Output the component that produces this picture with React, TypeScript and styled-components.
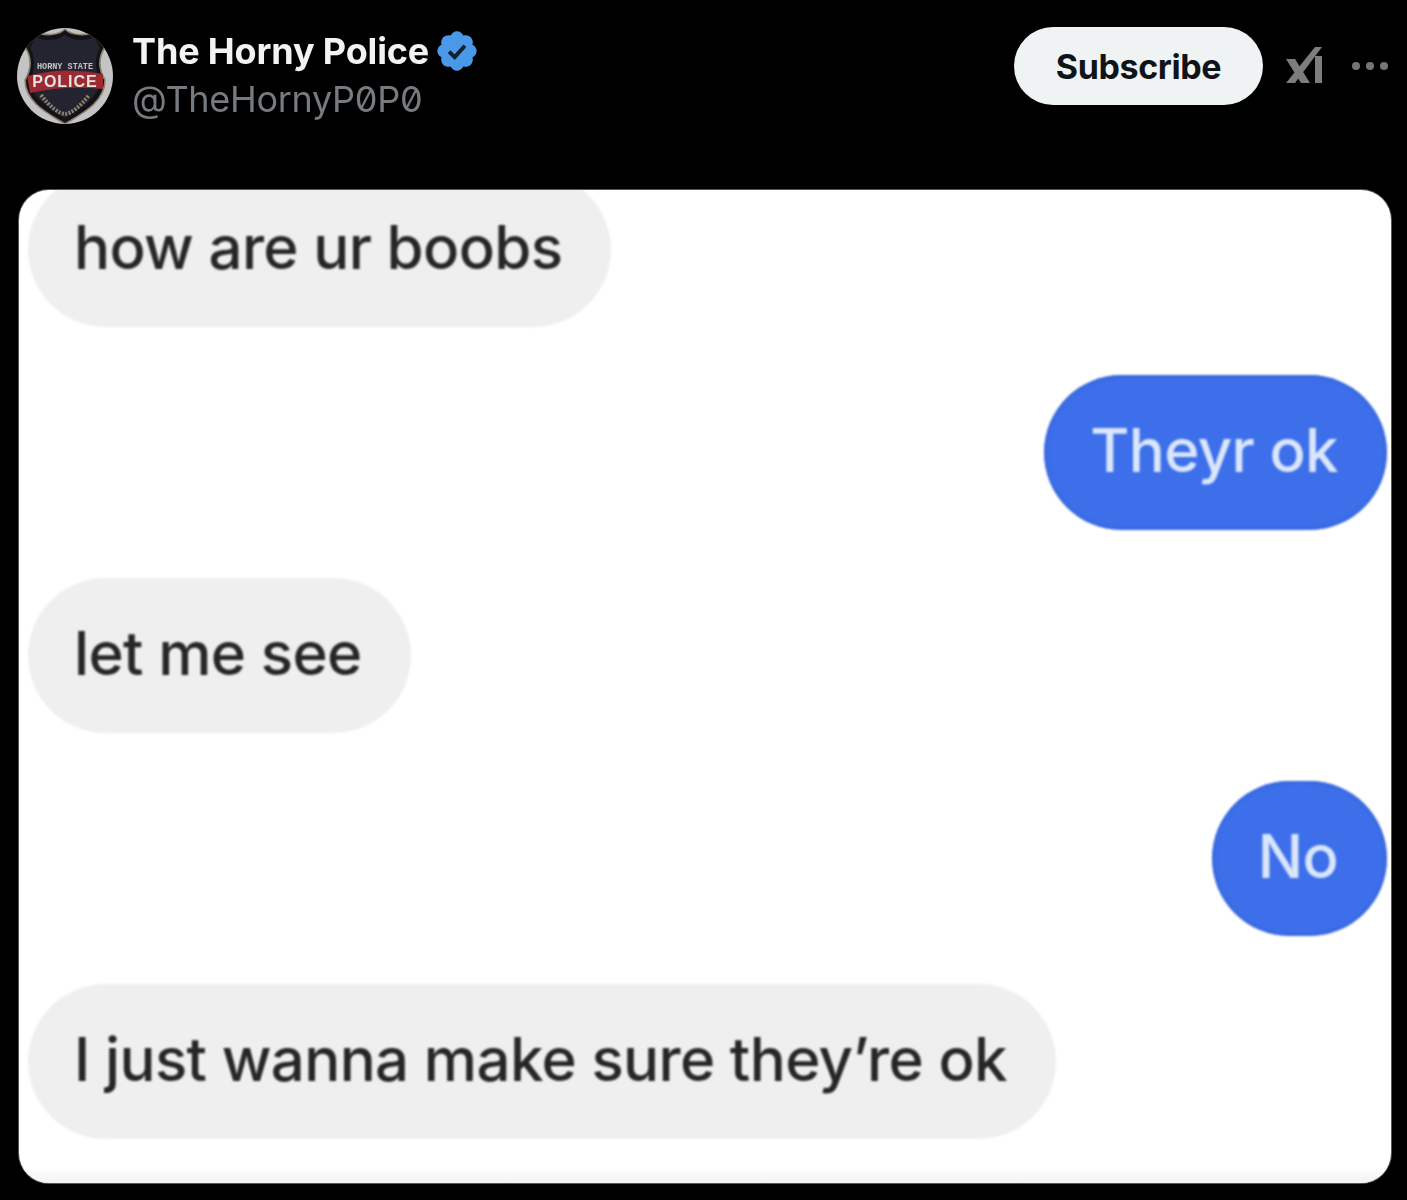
import React from "react";
import styled, { createGlobalStyle } from "styled-components";

const GlobalStyle = createGlobalStyle`
  html, body {
    margin: 0;
    padding: 0;
    background: #000;
  }
`;

const Page = styled.div`
  width: 1407px;
  height: 1200px;
  background: #000;
  overflow: hidden;
  box-sizing: border-box;
  padding: 27px 0 0 17px;
  font-family: Inter, "Liberation Sans", sans-serif;
`;

const Header = styled.header`
  display: flex;
  align-items: flex-start;
  height: 163px;
  margin-right: 19px;
`;

const Avatar = styled.svg`
  width: 96px;
  height: 96px;
  flex: none;
  margin: 1px 19px 0 0;
  filter: blur(0.6px);
`;

const Names = styled.div`
  flex: 1;
  display: flex;
  flex-direction: column;
`;

const NameRow = styled.div`
  display: flex;
  align-items: center;
  gap: 5px;
  height: 48px;
`;

const Name = styled.span`
  color: #f1f3f4;
  font-size: 36px;
  font-weight: 700;
  letter-spacing: -0.15px;
  filter: blur(0.3px);
`;

const Badge = styled.svg`
  width: 46px;
  height: 46px;
  flex: none;
`;

const Handle = styled.span`
  color: #767b80;
  font-size: 36px;
  line-height: 48px;
  font-feature-settings: "zero" 1;
  letter-spacing: -0.3px;
  filter: blur(0.3px);
`;

const Actions = styled.div`
  display: flex;
  align-items: center;
  height: 78px;
`;

const SubscribeButton = styled.button`
  width: 249px;
  height: 78px;
  border: 0;
  border-radius: 39px;
  background: #eff3f4;
  color: #0f1419;
  font: 700 34px Inter, "Liberation Sans", sans-serif;
  letter-spacing: -0.4px;
  padding: 0;
`;

const XaiLogo = styled.svg`
  width: 37px;
  height: 36px;
  margin: 0 0 3px 23px;
  filter: blur(0.3px);
`;

const Dots = styled.div`
  display: flex;
  gap: 6px;
  margin-left: 29px;
`;

const Dot = styled.i`
  width: 8px;
  height: 8px;
  border-radius: 50%;
  background: #71767b;
`;

const Card = styled.main`
  width: 1372px;
  height: 993px;
  margin-left: 2px;
  box-sizing: border-box;
  background: #fff;
  border-radius: 30px;
  overflow: hidden;
  display: flex;
  flex-direction: column;
  gap: 48px;
  padding: 0 4px 0 9px;
  position: relative;
  box-shadow: 0 0 0 1px #55585a;
`;

const Bubble = styled.div<{ $mine?: boolean; $first?: boolean }>`
  height: 155px;
  flex: none;
  box-sizing: border-box;
  align-self: ${(p) => (p.$mine ? "flex-end" : "flex-start")};
  margin-top: ${(p) => (p.$first ? "-18px" : "0")};
  padding: 0 49px 6px 46px;
  border-radius: 78px;
  display: flex;
  align-items: center;
  justify-content: center;
  background: ${(p) => (p.$mine ? "#3d6fea" : "#efefef")};
  color: ${(p) => (p.$mine ? "#d9e6fb" : "#262626")};
  box-shadow: ${(p) => (p.$mine ? "inset 0 0 5px #2f5bc4" : "none")};
  font: 450 60px Inter, "Liberation Sans", sans-serif;
  letter-spacing: -0.65px;
  white-space: nowrap;
  filter: blur(1.1px);
`;

const BottomFade = styled.div`
  position: absolute;
  left: 0;
  right: 0;
  bottom: 0;
  height: 16px;
  background: linear-gradient(#fff, #f2f2f2);
`;

export default function App() {
  return (
    <Page>
      <GlobalStyle />
      <Header>
        <Avatar viewBox="0 0 96 96">
          <defs>
            <clipPath id="round">
              <circle cx="48" cy="48" r="48" />
            </clipPath>
          </defs>
          <g clipPath="url(#round)">
            <rect width="96" height="96" fill="#c4c4c4" />
            <path
              d="M48 1 C54 7 68 9 80 3 L88 19 C81 30 82 42 88 52 C88 74 66 85 48 96 C30 85 8 74 8 52 C14 42 15 30 8 19 L16 3 C28 9 42 7 48 1Z"
              fill="#121218"
              stroke="#8d8570"
              strokeWidth="1.6"
            />
            <path
              d="M48 7 C54 12 68 14 77 9 L83 20 C77 30 78 42 83 52 C83 69 64 80 48 90 C32 80 13 69 13 52 C18 42 19 30 13 20 L19 9 C28 14 42 12 48 7Z"
              fill="#23242f"
            />
            <path d="M10 48 Q48 38 86 46 L86 61 Q48 57 13 65Z" fill="#9c2a30" />
            <text x="48" y="41" textAnchor="middle" fontFamily="Liberation Mono, monospace" fontSize="8.500" fontWeight="700" fill="#c4c4c4">
              HORNY STATE
            </text>
            <text x="48" y="59" textAnchor="middle" fontFamily="Liberation Sans, sans-serif" fontSize="16" fontWeight="700" fill="#e4e4e4" letterSpacing="1">
              POLICE
            </text>
            <path d="M24 67 Q38 85 48 86 Q58 85 72 67" fill="none" stroke="#8d8570" strokeWidth="4" strokeDasharray="2 1.500" />
          </g>
        </Avatar>
        <Names>
          <NameRow>
            <Name>The Horny Police</Name>
            <Badge viewBox="0 0 22 22">
              <path
                fill="#4a99e9"
                d="M20.4 11c0-1.3-.8-2.5-2-3 .4-1.200.1-2.600-.8-3.600-1-.9-2.400-1.200-3.600-.8-.5-1.200-1.700-2-3-2s-2.500.8-3 2c-1.200-.4-2.600-.1-3.600.8-.9 1-1.200 2.400-.8 3.600-1.200.5-2 1.700-2 3s.8 2.500 2 3c-.4 1.200-.1 2.600.8 3.600 1 .9 2.400 1.200 3.600.8.5 1.200 1.700 2 3 2s2.500-.8 3-2c1.200.4 2.600.1 3.600-.8.9-1 1.200-2.400.8-3.600 1.200-.5 2-1.700 2-3z"
              />
              <path fill="none" stroke="#10212f" strokeWidth="1.900" d="M7.200 11.300l2.700 2.600 4.900-5.400" />
            </Badge>
          </NameRow>
          <Handle>@TheHornyP0P0</Handle>
        </Names>
        <Actions>
          <SubscribeButton>Subscribe</SubscribeButton>
          <XaiLogo viewBox="0 0 37 36">
            <path fill="#7d7d7d" d="M0 12 H9 L24 36 H15 Z" />
            <path fill="#7d7d7d" d="M0 36 L29 0 H36 L9 36 Z" />
            <path fill="#7d7d7d" d="M29 9 H36 V36 H29 Z" />
          </XaiLogo>
          <Dots>
            <Dot />
            <Dot />
            <Dot />
          </Dots>
        </Actions>
      </Header>
      <Card>
        <Bubble $first>how are ur boobs</Bubble>
        <Bubble $mine>Theyr ok</Bubble>
        <Bubble>let me see</Bubble>
        <Bubble $mine>No</Bubble>
        <Bubble>I just wanna make sure they’re ok</Bubble>
        <BottomFade />
      </Card>
    </Page>
  );
}
